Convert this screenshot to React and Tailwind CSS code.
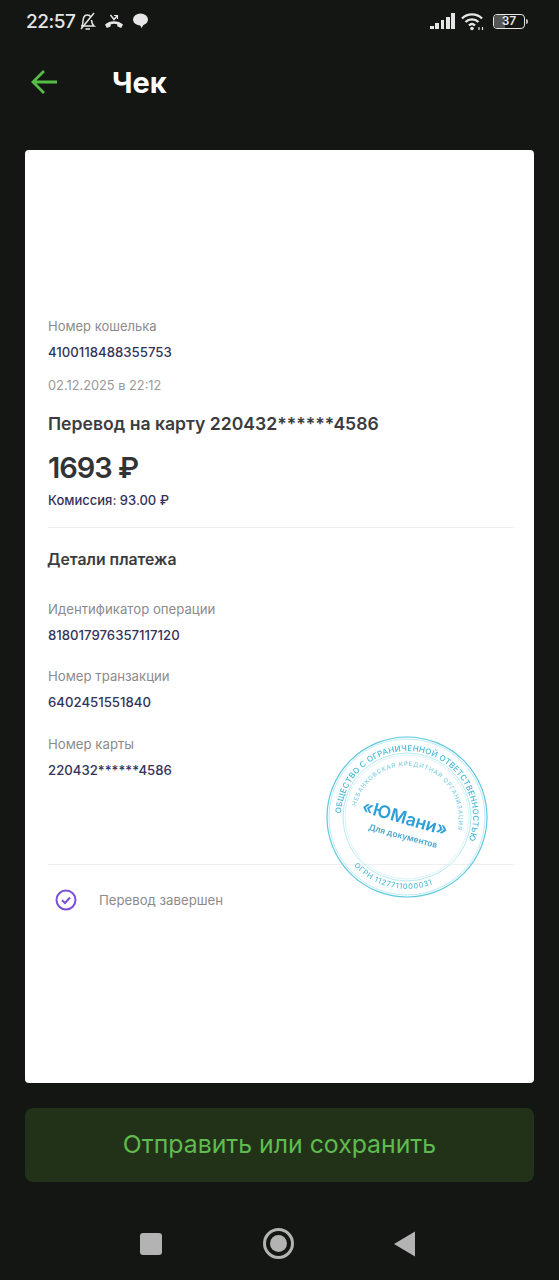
import { useId } from "react";

const font = { fontFamily: "Inter, 'Noto Sans', sans-serif" };

function StatusBar() {
  return (
    <div className="flex h-[42px] items-center pl-[26px] pr-[31px] text-[#e6e6e6]">
      <span className="text-[19px] leading-none font-medium tracking-[-0.5px]">22:57</span>
      {/* muted bell */}
      <svg className="ml-[4px]" width="18" height="19" viewBox="0 0 18 19" fill="none" stroke="currentColor" strokeWidth="1.500">
        <path d="M3 14c1-2 1-4 1.200-6.500C4.500 4.500 6.500 3 8.500 3c1.500 0 2.700.7 3.300 2M12.500 8c.2 2.500.5 4.500 2.500 6H2" />
        <path d="M6.500 17h4.500M2 17L15 1" />
      </svg>
      {/* missed call */}
      <svg className="ml-[8px]" width="18" height="15" viewBox="0 0 18 15" fill="currentColor">
        <path d="M0 10.500c4.500-4.500 13.500-4.500 18 0l-1.800 3.500-3.700-1.400-.4-2.300c-2.200-.8-4-.8-6.200 0l-.4 2.300-3.700 1.400z" />
        <path d="M5.500 1L9 5.500 12 2" fill="none" stroke="currentColor" strokeWidth="1.500" />
        <path d="M9 1.500h3.500V5" fill="none" stroke="currentColor" strokeWidth="1.200" />
      </svg>
      {/* chat bubble */}
      <svg className="ml-[10px]" width="15" height="16" viewBox="0 0 15 16" fill="currentColor">
        <ellipse cx="7.500" cy="6.500" rx="7.500" ry="6" />
        <path d="M6.500 11h4.500l-2.500 4z" />
      </svg>
      <div className="flex-1" />
      {/* signal bars */}
      <div className="flex h-[16px] items-end gap-[1.500px]">
        <div className="h-[3px] w-[3.800px] bg-[#e6e6e6]" />
        <div className="h-[6px] w-[3.800px] bg-[#e6e6e6]" />
        <div className="h-[9px] w-[3.800px] bg-[#e6e6e6]" />
        <div className="h-[12px] w-[3.800px] bg-[#e6e6e6]" />
        <div className="h-[16px] w-[3.800px] bg-[#e6e6e6]" />
      </div>
      {/* wifi */}
      <svg className="ml-[6px]" width="24" height="20" viewBox="0 0 24 20" fill="none" stroke="currentColor" strokeWidth="2.400">
        <path d="M1 7.500C6.500 2 15.500 2 21 7.500M4.500 11c3.500-3.500 9.500-3.500 13 0M8 14.500c1.800-1.800 4.200-1.800 6 0" />
        <circle cx="11" cy="17.500" r="1.800" fill="currentColor" stroke="none" />
        <path d="M18 19v-3M21.500 19v-3" strokeWidth="1.200" />
      </svg>
      {/* battery */}
      <div className="ml-[8px] flex items-center">
        <div className="relative flex h-[15px] w-[32px] items-center justify-center overflow-hidden rounded-[4px] border-[1.500px] border-[#e6e6e6]">
          <div className="absolute inset-y-0 left-0 w-[11px] bg-[#555]" />
          <span className="relative text-[12px] leading-none font-semibold text-[#e6e6e6]">37</span>
        </div>
        <div className="ml-[1px] h-[5px] w-[2px] rounded-r-sm bg-[#bbb]" />
      </div>
    </div>
  );
}

function Field({ label, value, className }) {
  return (
    <div className={className}>
      <div className="text-[13.200px] leading-[16px] text-[#8b8b8e]">{label}</div>
      <div className="mt-[10px] text-[13.200px] leading-[16px] font-medium text-[#33335a]">{value}</div>
    </div>
  );
}

function Stamp() {
  const id = useId();
  const topArc = `${id}-top`;
  const innerArc = `${id}-inner`;
  const lowArc = `${id}-low`;
  return (
    <svg className="absolute top-[733px] left-[323px] blur-[0.3px]" width="168" height="168" viewBox="0 0 168 168" fill="none">
      <circle cx="84" cy="84" r="80" stroke="#5cc9de" strokeWidth="1.200" />
      <circle cx="84" cy="84" r="78" stroke="#8fdcea" strokeWidth="0.600" />
      <circle cx="84" cy="84" r="64" stroke="#a5e3ee" strokeWidth="0.800" />
      <circle cx="84" cy="84" r="62" stroke="#c4edf4" strokeWidth="0.600" />
      <path id={topArc} d="M18.100 80.500A66 66 0 1 1 146 106.600" />
      <path id={innerArc} d="M33.100 73.200A52 52 0 1 1 134.500 96.600" />
      <path id={lowArc} d="M30.700 132.400A72 72 0 0 0 110.600 150.900" />
      <g style={font} fill="#46b9d6">
        <text fontSize="8" fontWeight="500">
          <textPath href={`#${topArc}`} textLength="227">ОБЩЕСТВО С ОГРАНИЧЕННОЙ ОТВЕТСТВЕННОСТЬЮ</textPath>
        </text>
        <text fontSize="6" fontWeight="500" fill="#7fcfe3">
          <textPath href={`#${innerArc}`} textLength="163">НЕБАНКОВСКАЯ КРЕДИТНАЯ ОРГАНИЗАЦИЯ</textPath>
        </text>
        <text fontSize="7.500" fontWeight="500" fill="#5cc0d8">
          <textPath href={`#${lowArc}`} textLength="86">ОГРН 1127711000031</textPath>
        </text>
        <text x="82" y="91" textAnchor="middle" fontSize="17.500" fontWeight="600" fill="#2f9fd8" transform="rotate(16 82 85)">«ЮМани»</text>
        <text x="80" y="106" textAnchor="middle" fontSize="8.500" fontWeight="600" fill="#4aa8cc" transform="rotate(15 80 103)">Для документов</text>
      </g>
    </svg>
  );
}

export default function App() {
  return (
    <div className="relative flex h-[1280px] w-[559px] flex-col overflow-hidden bg-[#141614]" style={font}>
      <StatusBar />

      <div className="flex h-[80px] items-center pl-[31px]">
        <svg width="27" height="26" viewBox="0 0 27 26" fill="none" stroke="#55bd45" strokeWidth="2.800">
          <path d="M26 13H2M13 2L2 13l11 11" />
        </svg>
        <h1 className="ml-[54px] text-[29px] leading-none font-bold text-white">Чек</h1>
      </div>

      <main className="mx-[25px] mt-[28px] flex h-[933px] flex-col rounded-[4px] bg-white pt-[168px] pr-[20px] pl-[23px]">
        <div className="text-[13px] leading-[16px] text-[#8b8b8e]">Номер кошелька</div>
        <div className="mt-[10px] text-[13.200px] leading-[16px] font-medium text-[#33335a]">4100118488355753</div>
        <div className="mt-[18px] text-[12.800px] leading-[16px] text-[#98989c]">02.12.2025 в 22:12</div>
        <div className="mt-[20px] text-[17.600px] leading-[20px] font-semibold text-[#3c3c40]">Перевод на карту 220432******4586</div>
        <div className="mt-[18px] text-[29px] leading-[32px] font-semibold tracking-[-1px] text-[#333336]">1693 ₽</div>
        <div className="mt-[8px] text-[13px] leading-[16px] font-medium text-[#33335a]">Комиссия: 93.00 ₽</div>
        <div className="mt-[19px] h-px bg-[#efefef]" />
        <div className="mt-[22px] -ml-px text-[15.800px] leading-[20px] font-semibold text-[#3c3c40]">Детали платежа</div>
        <Field className="mt-[31px]" label="Идентификатор операции" value="818017976357117120" />
        <Field className="mt-[25px]" label="Номер транзакции" value="6402451551840" />
        <Field className="mt-[26px]" label="Номер карты" value="220432******4586" />
        <div className="mt-[86px] h-px bg-[#efefef]" />
        <div className="mt-[24px] flex items-center">
          <svg className="ml-[7px]" width="22" height="22" viewBox="0 0 22 22" fill="none" stroke="#7b4fd6" strokeWidth="2">
            <circle cx="11" cy="11" r="9.500" />
            <path d="M7 11.200l3 2.800 5-5.500" />
          </svg>
          <span className="ml-[22px] text-[13.200px] leading-[16px] text-[#8b8b8e]">Перевод завершен</span>
        </div>
      </main>

      <button className="mx-[25px] mt-[25px] flex h-[74px] items-center justify-center rounded-[8px] bg-[#223219] text-[24.800px] font-normal text-[#5fbb4e]">
        Отправить или сохранить
      </button>

      <nav className="relative mt-[24px] flex h-[74px] items-start justify-between pl-[140px] pr-[143px]">
        <div className="mt-[27px] h-[22px] w-[22px] rounded-[3px] bg-[#b3b3b3]" />
        <div className="mt-[22px] ml-[1px] flex h-[31px] w-[31px] items-center justify-center rounded-full border-[3px] border-[#b3b3b3]">
          <div className="h-[17px] w-[17px] rounded-full bg-[#b3b3b3]" />
        </div>
        <svg className="mt-[25px]" width="22" height="26" viewBox="0 0 22 26">
          <path d="M0 13L21 0.500V25.500z" fill="#b3b3b3" />
        </svg>
      </nav>

      <Stamp />
    </div>
  );
}
